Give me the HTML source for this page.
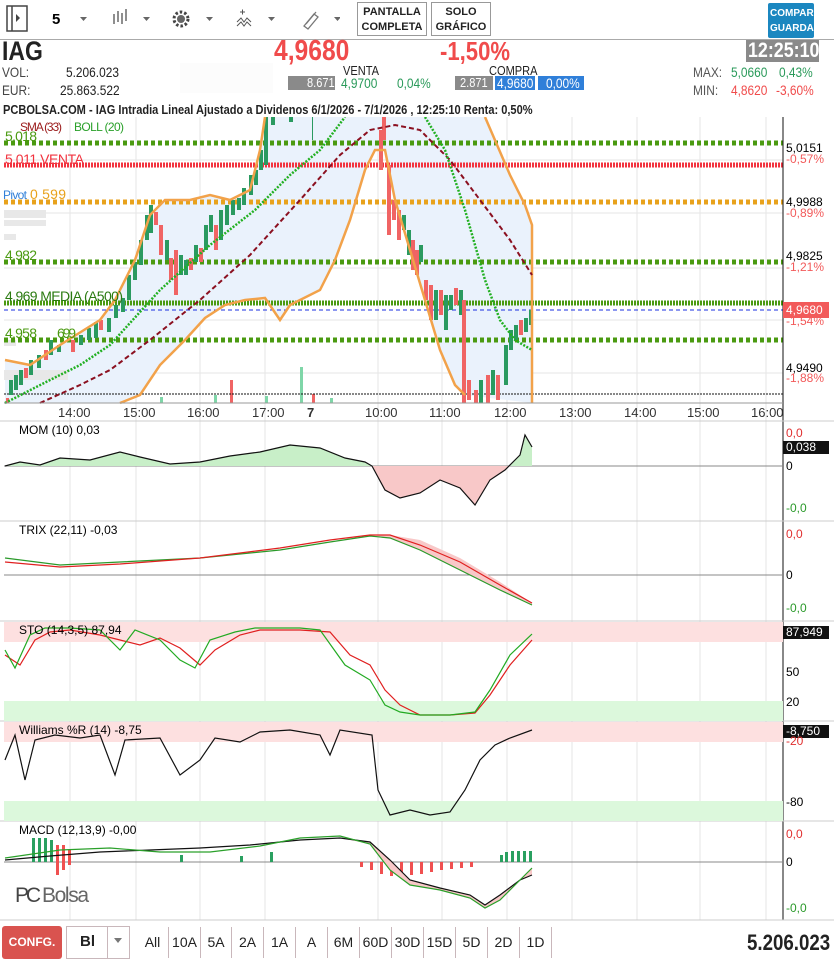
<!DOCTYPE html>
<html><head><meta charset="utf-8"><style>
*{margin:0;padding:0;box-sizing:border-box}
body{width:834px;height:963px;background:#fff;font-family:"Liberation Sans",sans-serif;position:relative;overflow:hidden;color:#222}
.a{position:absolute;white-space:nowrap}
.n{transform:scaleX(0.85);transform-origin:0 0}
.btn{position:absolute;border:1px solid #999;font-size:11px;font-weight:bold;text-align:center;line-height:15px;padding-top:2px;background:#fff}
.tb{position:absolute;top:927px;height:31px;line-height:31px;font-size:14px;text-align:center;border-right:1px solid #c9b7bb}
</style></head><body>
<svg class="a" style="left:0;top:0" width="340" height="38">
<rect x="7" y="6" width="20" height="25" fill="none" stroke="#444" stroke-width="1.5"/><line x1="12" y1="6" x2="12" y2="31" stroke="#444" stroke-width="1.5"/><path d="M16 14l4 4-4 4z" fill="#444"/>
<text x="52" y="24" font-size="15" font-weight="bold" font-family="Liberation Sans">5</text>
<path d="M80 17h7l-3.5 4z M143 17h7l-3.5 4z M206 17h7l-3.5 4z M268 17h7l-3.5 4z M334 17h7l-3.5 4z" fill="#666"/>
<g stroke="#444" stroke-width="1.2"><line x1="114" y1="14" x2="114" y2="24"/><line x1="118" y1="11" x2="118" y2="22"/><line x1="122" y1="13" x2="122" y2="24"/><line x1="126" y1="9" x2="126" y2="21"/></g>
<circle cx="181" cy="19" r="7" fill="none" stroke="#444" stroke-width="3" stroke-dasharray="2.5 2"/><circle cx="181" cy="19" r="4" fill="#666"/>
<path d="M240 12h5M242.5 9.5v5M237 22l4-4 3 4 3-4 4 4M237 26l4-4 3 4 3-4 4 4" stroke="#555" fill="none" stroke-width="1"/>
<path d="M304 26l10-12 4 3-10 12zM306 24l10-12" stroke="#777" fill="none" stroke-width="1.3"/>
</svg>
<div class="btn" style="left:357px;top:2px;width:70px;height:34px">PANTALLA<br>COMPLETA</div>
<div class="btn" style="left:431px;top:2px;width:60px;height:34px">SOLO<br>GRÁFICO</div>
<div class="a" style="left:768px;top:3px;width:46px;height:35px;background:#1b87c0;color:#fff;font-size:10px;font-weight:bold;line-height:15px;padding:3px 0 0 2px;overflow:hidden;border-radius:2px">COMPAR<br>GUARDA</div>
<div class="a" style="left:0;top:39px;width:834px;height:1px;background:#aaa"></div>
<div class="a n" style="left:2px;top:36px;font-size:27px;font-weight:bold">IAG</div>
<div class="a n" style="left:274px;top:35px;font-size:29px;font-weight:bold;color:#f04b4b">4,9680</div>
<div class="a n" style="left:440px;top:36px;font-size:26px;font-weight:bold;color:#f04b4b">-1,50%</div>
<div class="a" style="left:746px;top:40px;width:73px;height:22px;background:#8a8a8a"></div>
<div class="a n" style="left:748px;top:39px;font-size:21px;font-weight:bold;color:#fff;line-height:24px">12:25:10</div>
<div class="a n" style="left:2px;top:64px;font-size:14px;color:#444">VOL:</div>
<div class="a n" style="left:66px;top:64px;font-size:14px">5.206.023</div>
<div class="a n" style="left:2px;top:82px;font-size:14px;color:#444">EUR:</div>
<div class="a n" style="left:60px;top:82px;font-size:14px">25.863.522</div>
<div class="a" style="left:180px;top:63px;width:93px;height:30px;background:#fcfcfc"></div>
<div class="a n" style="left:343px;top:63px;font-size:13px">VENTA</div>
<div class="a" style="left:288px;top:76px;width:47px;height:14px;background:#8a8a8a"></div>
<div class="a n" style="left:307px;top:75px;font-size:13px;color:#fff">8.671</div>
<div class="a n" style="left:341px;top:75px;font-size:14px;color:#2a9a5a">4,9700</div>
<div class="a n" style="left:397px;top:75px;font-size:14px;color:#2a9a5a">0,04%</div>
<div class="a n" style="left:489px;top:63px;font-size:13px">COMPRA</div>
<div class="a" style="left:455px;top:76px;width:38px;height:14px;background:#8a8a8a"></div>
<div class="a n" style="left:460px;top:75px;font-size:13px;color:#fff">2.871</div>
<div class="a" style="left:495px;top:76px;width:40px;height:14px;background:#2f7fd9"></div>
<div class="a n" style="left:497px;top:75px;font-size:14px;color:#fff">4,9680</div>
<div class="a" style="left:538px;top:76px;width:46px;height:14px;background:#2f7fd9"></div>
<div class="a n" style="left:546px;top:75px;font-size:14px;color:#fff">0,00%</div>
<div class="a n" style="left:693px;top:64px;font-size:14px;color:#555">MAX:</div>
<div class="a n" style="left:731px;top:64px;font-size:14px;color:#2a9a5a">5,0660</div>
<div class="a n" style="left:779px;top:64px;font-size:14px;color:#2a9a5a">0,43%</div>
<div class="a n" style="left:693px;top:82px;font-size:14px;color:#555">MIN:</div>
<div class="a n" style="left:731px;top:82px;font-size:14px;color:#f04b4b">4,8620</div>
<div class="a n" style="left:776px;top:82px;font-size:14px;color:#f04b4b">-3,60%</div>
<div class="a n" style="left:3px;top:102px;font-size:13px;font-weight:bold;color:#222">PCBOLSA.COM - IAG Intradia Lineal Ajustado a Dividenos 6/1/2026 - 7/1/2026 , 12:25:10 Renta: 0,50%</div>
<svg class="a" style="left:0;top:117px" width="834" height="805" font-family="Liberation Sans">
<g transform="translate(0,-117)">
<g stroke="#e6e6e6" stroke-width="1">
<line x1="70" y1="117" x2="70" y2="920"/><line x1="136" y1="117" x2="136" y2="920"/><line x1="200" y1="117" x2="200" y2="920"/><line x1="265" y1="117" x2="265" y2="920"/><line x1="378" y1="117" x2="378" y2="920"/><line x1="442" y1="117" x2="442" y2="920"/><line x1="507" y1="117" x2="507" y2="920"/><line x1="572" y1="117" x2="572" y2="920"/><line x1="637" y1="117" x2="637" y2="920"/><line x1="700" y1="117" x2="700" y2="920"/><line x1="766" y1="117" x2="766" y2="920"/>
<line x1="4" y1="160" x2="783" y2="160"/><line x1="4" y1="213" x2="783" y2="213"/><line x1="4" y1="268" x2="783" y2="268"/><line x1="4" y1="320" x2="783" y2="320"/><line x1="4" y1="373" x2="783" y2="373"/>
</g>
<path d="M5 360L30 365L60 345L100 320L115 300L135 260L150 215L165 200L190 200L210 195L230 200L250 190L260 150L265 117L485 117L510 175L525 205L532 225L532 403L465 395L455 385L440 350L425 300L410 250L395 200L385 150L375 150L365 170L350 220L335 260L320 290L300 300L290 305L280 320L265 298L245 300L225 305L205 318L185 340L160 365L140 395L120 403L5 403Z" fill="#eaf2fc"/>
<g fill="#7fd6a8"><rect x="300" y="367" width="3" height="36"/><rect x="214" y="395" width="3" height="8"/><rect x="265" y="396" width="3" height="7"/><rect x="160" y="397" width="3" height="6"/><rect x="330" y="398" width="3" height="5"/></g>
<g fill="#f06464"><rect x="230" y="380" width="3" height="23"/><rect x="6" y="398" width="3" height="5"/><rect x="312" y="394" width="3" height="9"/></g>
<line x1="4" y1="394" x2="783" y2="394" stroke="#111" stroke-dasharray="2 1"/>
<g fill="#e8e8e8"><rect x="4" y="210" width="42" height="8"/><rect x="4" y="220" width="42" height="6"/><rect x="4" y="234" width="12" height="6"/><rect x="4" y="340" width="12" height="6"/><rect x="4" y="370" width="64" height="10"/></g>
<g stroke-width="5" stroke-dasharray="4 3" fill="none">
<line x1="4" y1="143" x2="783" y2="143" stroke="#4a9a10"/>
<line x1="4" y1="165" x2="783" y2="165" stroke="#f2333f" stroke-dasharray="2 1"/>
<line x1="4" y1="202" x2="783" y2="202" stroke="#e8a21c"/>
<line x1="4" y1="262" x2="783" y2="262" stroke="#4a9a10"/>
<line x1="4" y1="303" x2="783" y2="303" stroke="#4a9a10" stroke-dasharray="2 1"/>
<line x1="4" y1="340" x2="783" y2="340" stroke="#4a9a10"/>
</g>
<line x1="4" y1="310" x2="783" y2="310" stroke="#1a2fe0" stroke-dasharray="4 3"/>
<g fill="#2a9a60">
<rect x="9" y="380" width="4" height="15"/><rect x="14" y="375" width="4" height="15"/><rect x="19" y="370" width="4" height="15"/><rect x="29" y="360" width="4" height="15"/><rect x="37" y="355" width="4" height="13"/><rect x="49" y="340" width="4" height="15"/><rect x="57" y="345" width="4" height="7"/><rect x="79" y="335" width="4" height="10"/><rect x="87" y="328" width="4" height="12"/><rect x="94" y="322" width="4" height="16"/><rect x="107" y="318" width="4" height="14"/><rect x="114" y="305" width="4" height="13"/><rect x="121" y="298" width="4" height="14"/><rect x="127" y="275" width="4" height="25"/><rect x="133" y="262" width="4" height="18"/><rect x="139" y="240" width="4" height="25"/><rect x="145" y="215" width="4" height="25"/><rect x="149" y="205" width="4" height="28"/><rect x="165" y="240" width="4" height="20"/><rect x="179" y="255" width="4" height="20"/><rect x="184" y="260" width="4" height="15"/><rect x="194" y="245" width="4" height="17"/><rect x="204" y="225" width="4" height="25"/><rect x="209" y="215" width="4" height="17"/><rect x="219" y="210" width="4" height="30"/><rect x="225" y="205" width="4" height="20"/><rect x="231" y="200" width="4" height="15"/><rect x="237" y="198" width="4" height="12"/><rect x="242" y="188" width="4" height="17"/><rect x="249" y="175" width="4" height="20"/><rect x="254" y="170" width="4" height="15"/><rect x="259" y="150" width="4" height="20"/><rect x="264" y="117" width="4" height="48"/><rect x="271" y="117" width="4" height="8"/><rect x="289" y="117" width="4" height="5"/><rect x="312" y="117" width="1" height="23"/>
<rect x="402" y="215" width="4" height="15"/><rect x="407" y="230" width="4" height="25"/><rect x="419" y="245" width="4" height="17"/><rect x="434" y="290" width="4" height="30"/><rect x="444" y="295" width="4" height="35"/><rect x="449" y="295" width="4" height="15"/><rect x="459" y="290" width="4" height="25"/><rect x="479" y="380" width="4" height="23"/><rect x="491" y="370" width="4" height="25"/><rect x="504" y="345" width="4" height="40"/><rect x="509" y="330" width="4" height="20"/><rect x="514" y="325" width="4" height="15"/><rect x="524" y="318" width="4" height="14"/><rect x="529" y="310" width="4" height="15"/>
</g>
<g fill="#f06464">
<rect x="24" y="368" width="4" height="10"/><rect x="44" y="350" width="4" height="10"/><rect x="71" y="340" width="4" height="12"/><rect x="99" y="320" width="4" height="10"/><rect x="154" y="212" width="4" height="13"/><rect x="159" y="225" width="4" height="30"/><rect x="169" y="258" width="4" height="22"/><rect x="174" y="250" width="4" height="45"/><rect x="189" y="258" width="4" height="12"/><rect x="199" y="248" width="4" height="14"/><rect x="214" y="225" width="4" height="25"/>
<rect x="379" y="130" width="4" height="40"/><rect x="382" y="117" width="4" height="23"/><rect x="387" y="165" width="4" height="70"/><rect x="392" y="200" width="4" height="20"/><rect x="397" y="210" width="4" height="30"/><rect x="411" y="240" width="4" height="30"/><rect x="415" y="250" width="4" height="25"/><rect x="424" y="280" width="4" height="20"/><rect x="429" y="285" width="4" height="35"/><rect x="439" y="290" width="4" height="25"/><rect x="454" y="288" width="4" height="17"/><rect x="462" y="300" width="4" height="103"/><rect x="467" y="380" width="4" height="20"/><rect x="474" y="390" width="4" height="13"/><rect x="486" y="375" width="4" height="28"/><rect x="496" y="375" width="4" height="25"/><rect x="519" y="320" width="4" height="15"/>
</g>
<path d="M5 360L30 365L60 345L100 320L115 300L135 260L150 215L165 200L190 200L210 195L230 200L250 190L260 150L265 117M485 117L510 175L525 205L532 225L532 403M120 403L140 395L160 365L185 340L205 318L225 305L245 300L265 298L280 320L290 305L300 300L320 290L335 260L350 220L365 170L375 150L385 150L395 200L410 250L425 300L440 350L455 385L465 395" fill="none" stroke="#f2a24a" stroke-width="2.5"/>
<path d="M40 403L80 385L110 370L150 340L200 300L250 255L300 200L340 155L370 130L395 125L420 130L450 160L480 200L510 240L532 275" fill="none" stroke="#8b1020" stroke-width="2" stroke-dasharray="5 3"/>
<path d="M5 403L50 380L80 365L110 345L160 290L210 245L255 210L290 175L320 150L345 117M425 117L445 150L465 210L485 280L500 320L515 340L532 350" fill="none" stroke="#22b022" stroke-width="2.5" stroke-dasharray="2 1.5"/>
<text x="20" y="131" font-size="12" fill="#9a1a1a" textLength="42">SMA (33)</text><text x="74" y="131" font-size="12" fill="#2aa02a" textLength="50">BOLL (20)</text>
<text x="5" y="141" font-size="14" fill="#4a9a10" textLength="32">5,018</text>
<text x="5" y="164" font-size="14" fill="#f2333f" textLength="79">5,011  VENTA</text>
<text x="3" y="199" font-size="12" fill="#2f7fd9" textLength="24">Pivot</text><text x="30" y="199" font-size="14" fill="#e8a21c" textLength="36">0   599</text>
<text x="5" y="260" font-size="14" fill="#4a9a10" textLength="32">4,982</text>
<text x="5" y="301" font-size="14" fill="#2a7a10" textLength="118">4,969  MEDIA (A500)</text>
<text x="5" y="338" font-size="14" fill="#4a9a10" textLength="32">4,958</text><text x="57" y="338" font-size="14" fill="#4a9a10" textLength="19">699</text>
<line x1="783" y1="117" x2="783" y2="920" stroke="#111"/>
<g font-size="12"><text x="786" y="152">5,0151</text><text x="786" y="163" fill="#f25a5a">-0,57%</text>
<text x="786" y="206">4,9988</text><text x="786" y="217" fill="#f25a5a">-0,89%</text>
<text x="786" y="260">4,9825</text><text x="786" y="271" fill="#f25a5a">-1,21%</text>
<text x="786" y="325" fill="#f25a5a">-1,54%</text>
<text x="786" y="372">4,9490</text><text x="786" y="382" fill="#f25a5a">-1,88%</text></g>
<rect x="783" y="302" width="46" height="16" fill="#f25a5a"/><text x="786" y="314" font-size="12" fill="#fff">4,9680</text>
<line x1="4" y1="403" x2="783" y2="403" stroke="#999"/>
<g font-size="13" fill="#333"><text x="58" y="417">14:00</text><text x="123" y="417">15:00</text><text x="187" y="417">16:00</text><text x="252" y="417">17:00</text><text x="307" y="417" font-weight="bold">7</text><text x="365" y="417">10:00</text><text x="429" y="417">11:00</text><text x="494" y="417">12:00</text><text x="559" y="417">13:00</text><text x="624" y="417">14:00</text><text x="687" y="417">15:00</text><text x="751" y="417">16:00</text></g>
<g stroke="#ccc"><line x1="0" y1="421" x2="834" y2="421"/><line x1="0" y1="521" x2="834" y2="521"/><line x1="0" y1="621" x2="834" y2="621"/><line x1="0" y1="721" x2="834" y2="721"/><line x1="0" y1="821" x2="834" y2="821"/><line x1="0" y1="920" x2="834" y2="920"/></g>
<line x1="4" y1="466" x2="783" y2="466" stroke="#888"/>
<path d="M5 466L20 462L40 465L60 458L90 460L120 452L140 457L170 464L200 462L230 456L260 452L290 445L320 448L345 458L365 462L372 466Z" fill="#c8efc8"/>
<path d="M372 466L385 490L400 498L420 493L440 480L460 488L475 505L490 480L505 470L510 466Z" fill="#f8c8c8"/>
<path d="M510 466L520 455L525 435L532 447L532 466Z" fill="#c8efc8"/>
<path d="M5 466L20 462L40 465L60 458L90 460L120 452L140 457L170 464L200 462L230 456L260 452L290 445L320 448L345 458L365 462L372 466L385 490L400 498L420 493L440 480L460 488L475 505L490 480L505 470L515 460L520 455L525 435L532 447" fill="none" stroke="#111" stroke-width="1.2"/>
<text x="19" y="434" font-size="12">MOM (10)  0,03</text>
<text x="786" y="437" font-size="12" fill="#e03030">0,0</text><rect x="783" y="441" width="46" height="13" fill="#111"/><text x="786" y="451" font-size="12" fill="#fff">0,038</text>
<text x="786" y="470" font-size="12">0</text><text x="786" y="512" font-size="12" fill="#2a9a2a">-0,0</text>
<line x1="4" y1="575" x2="783" y2="575" stroke="#888"/>
<path d="M370 536L390 538L420 550L460 570L500 590L532 605L532 603L500 582L460 558L420 540L390 535Z" fill="#f8c8c8"/>
<path d="M5 558L60 565L120 562L200 558L280 550L330 542L370 536L390 538L420 550L460 570L500 590L532 605" fill="none" stroke="#2a9a2a" stroke-width="1.2"/>
<path d="M5 562L60 567L120 564L200 558L280 548L330 540L370 535L390 535L420 545L460 562L500 585L532 603" fill="none" stroke="#e02020" stroke-width="1.2"/>
<text x="19" y="534" font-size="12">TRIX (22,11)   -0,03</text>
<text x="786" y="538" font-size="12" fill="#e03030">0,0</text><text x="786" y="579" font-size="12">0</text><text x="786" y="612" font-size="12" fill="#2a9a2a">-0,0</text>
<rect x="4" y="622" width="779" height="20" fill="#fde0e0"/><rect x="4" y="701" width="779" height="20" fill="#dcf8dc"/>
<path d="M5 655L20 665L35 640L50 632L70 630L100 635L120 640L140 645L160 638L180 648L200 665L215 650L240 635L260 630L300 630L330 632L350 655L370 665L385 690L400 705L420 715L450 715L475 713L490 695L510 665L532 640" fill="none" stroke="#e02020" stroke-width="1.2"/>
<path d="M5 650L15 668L30 635L45 628L70 628L100 630L120 650L135 630L160 640L180 660L195 668L210 640L235 632L255 628L300 628L320 630L345 665L370 680L385 705L400 712L420 715L450 715L475 712L490 690L510 655L532 634" fill="none" stroke="#22aa22" stroke-width="1.2"/>
<text x="19" y="634" font-size="12">STO (14,3,5)   87,94</text>
<rect x="783" y="626" width="46" height="13" fill="#111"/><text x="786" y="636" font-size="12" fill="#fff">87,949</text>
<text x="786" y="676" font-size="12">50</text><text x="786" y="706" font-size="12">20</text>
<rect x="4" y="722" width="779" height="20" fill="#fde0e0"/><rect x="4" y="801" width="779" height="20" fill="#dcf8dc"/>
<path d="M5 760L15 735L25 780L35 740L55 735L80 738L100 735L115 775L125 740L160 738L180 775L200 760L215 738L240 742L260 732L290 730L320 735L330 755L340 730L372 735L378 790L390 815L410 810L430 815L450 812L465 790L480 760L495 745L510 738L532 730" fill="none" stroke="#111" stroke-width="1.2"/>
<text x="19" y="734" font-size="12">Williams %R (14)  -8,75</text>
<rect x="783" y="725" width="46" height="13" fill="#111"/><text x="786" y="735" font-size="12" fill="#fff">-8,750</text>
<text x="786" y="745" font-size="12" fill="#e03030">-20</text><text x="786" y="806" font-size="12">-80</text>
<line x1="4" y1="862" x2="783" y2="862" stroke="#888"/>
<g fill="#2aa060"><rect x="32" y="838" width="3" height="24"/><rect x="38" y="838" width="3" height="24"/><rect x="44" y="838" width="3" height="24"/><rect x="50" y="840" width="3" height="22"/><rect x="180" y="855" width="3" height="7"/><rect x="240" y="856" width="3" height="6"/><rect x="270" y="852" width="3" height="10"/><rect x="500" y="855" width="3" height="7"/><rect x="505" y="852" width="3" height="10"/><rect x="511" y="851" width="3" height="11"/><rect x="517" y="851" width="3" height="11"/><rect x="523" y="851" width="3" height="11"/><rect x="529" y="851" width="3" height="11"/></g>
<g fill="#f05050"><rect x="56" y="845" width="3" height="30"/><rect x="62" y="845" width="3" height="25"/><rect x="68" y="850" width="3" height="15"/><rect x="360" y="862" width="3" height="5"/><rect x="370" y="862" width="3" height="8"/><rect x="380" y="862" width="3" height="12"/><rect x="390" y="862" width="3" height="14"/><rect x="400" y="862" width="3" height="14"/><rect x="410" y="862" width="3" height="13"/><rect x="420" y="862" width="3" height="12"/><rect x="430" y="862" width="3" height="10"/><rect x="440" y="862" width="3" height="8"/><rect x="450" y="862" width="3" height="7"/><rect x="460" y="862" width="3" height="6"/><rect x="470" y="862" width="3" height="5"/></g>
<path d="M340 838L370 844L390 870L410 885L440 890L470 898L485 908L500 900L515 885L532 868L532 875L520 880L500 895L485 905L470 895L440 888L410 880L390 860L370 842Z" fill="#f8c8c8"/>
<path d="M5 860L50 856L100 852L150 850L200 848L250 845L300 840L340 838L370 842L390 860L410 880L440 888L470 895L485 905L500 895L520 880L532 875" fill="none" stroke="#111" stroke-width="1.2"/>
<path d="M5 858L60 850L110 848L160 852L210 852L260 846L300 838L340 836L370 844L390 870L410 885L440 890L470 898L485 908L500 900L515 885L532 868" fill="none" stroke="#2aa02a" stroke-width="1.2"/>
<text x="19" y="834" font-size="12">MACD (12,13,9)   -0,00</text>
<text x="786" y="838" font-size="12" fill="#e03030">0,0</text><text x="786" y="866" font-size="12">0</text><text x="786" y="912" font-size="12" fill="#2a9a2a">-0,0</text>
<text x="15" y="902" font-size="21" fill="#444" textLength="26">PC</text><text x="42" y="902" font-size="21" fill="#666" textLength="47">Bolsa</text>
</g></svg>
<div class="a" style="left:2px;top:926px;width:60px;height:33px;background:#d9534f;color:#fff;font-size:12px;font-weight:bold;text-align:center;line-height:33px;border-radius:3px">CONFG.</div>
<div class="a" style="left:66px;top:926px;width:64px;height:33px;border:1px solid #c9b7bb"></div>
<div class="a" style="left:80px;top:933px;font-size:15px;font-weight:bold">Bl</div>
<div class="a" style="left:107px;top:926px;width:1px;height:33px;background:#c9b7bb"></div>
<div class="a" style="left:114px;top:938px;width:0;height:0;border-left:4px solid transparent;border-right:4px solid transparent;border-top:5px solid #777"></div>
<div class="tb" style="left:137px;width:32px">All</div>
<div class="tb" style="left:169px;width:32px">10A</div>
<div class="tb" style="left:201px;width:31px">5A</div>
<div class="tb" style="left:232px;width:32px">2A</div>
<div class="tb" style="left:264px;width:32px">1A</div>
<div class="tb" style="left:296px;width:32px">A</div>
<div class="tb" style="left:328px;width:32px">6M</div>
<div class="tb" style="left:360px;width:32px">60D</div>
<div class="tb" style="left:392px;width:32px">30D</div>
<div class="tb" style="left:424px;width:32px">15D</div>
<div class="tb" style="left:456px;width:32px">5D</div>
<div class="tb" style="left:488px;width:32px">2D</div>
<div class="tb" style="left:520px;width:32px">1D</div>
<div class="a n" style="left:747px;top:930px;font-size:22px;font-weight:bold">5.206.023</div>
</body></html>
